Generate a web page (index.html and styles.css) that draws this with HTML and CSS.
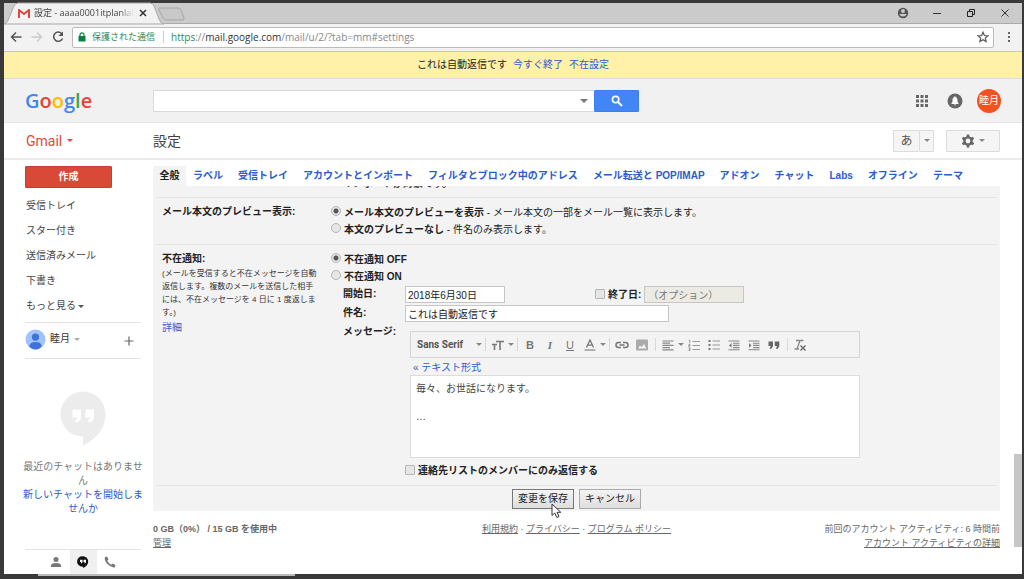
FILE: index.html
```html
<!DOCTYPE html>
<html lang="ja">
<head>
<meta charset="utf-8">
<title>設定 - Gmail</title>
<link rel="stylesheet" href="styles.css">
</head>
<body>
<div class="window">
  <div class="tabstrip">
    <svg class="tab-shape" viewBox="0 0 184 21" aria-hidden="true">
      <path d="M0 21 C3 20 4 18 5 15 L10 3 Q11 0 14 0 H146 Q149 0 150 3 L155 16 Q157 21 160 21 Z" fill="#f2f2f2" stroke="#a9a9a9"/>
      <path d="M155 5 H174 Q176 5 177 7 L180 15 Q181 17 178 17 H162 Q160 17 159 15 L155 7 Q154 5 155 5Z" fill="#c8c8c8" stroke="#a6a6a6"/>
    </svg>
    <div class="tab">
      <svg class="fav" viewBox="0 0 12 9" aria-hidden="true"><path d="M1 9V1L6 5L11 1V9" fill="#f6f6f6" stroke="#d94b3f" stroke-width="2"/></svg>
      <span class="tab-title">設定 - aaaa0001itplanlab</span>
      <button class="bare tab-close" aria-label="タブを閉じる"><svg viewBox="0 0 8 8"><path d="M1 1L7 7M7 1L1 7" stroke="#333" stroke-width="1.5"/></svg></button>
    </div>
    <div class="win-controls">
      <button class="bare" aria-label="ユーザー"><svg viewBox="0 0 12 12"><circle cx="6" cy="6" r="5.2" fill="#555"/><circle cx="6" cy="4" r="1.9" fill="#ccc"/><path d="M2.4 7H9.6Q8.500 9.600 6 9.600T2.400 7Z" fill="#ccc"/></svg></button>
      <button class="bare" aria-label="最小化"><svg viewBox="0 0 12 12"><path d="M2 6.500H10" stroke="#333"/></svg></button>
      <button class="bare" aria-label="元に戻す"><svg viewBox="0 0 12 12"><path d="M2.500 4.500H7.500V9.500H2.500ZM4.500 4V2.500H9.500V7.500H8" fill="none" stroke="#222"/></svg></button>
      <button class="bare" aria-label="閉じる"><svg viewBox="0 0 12 12"><path d="M2.500 2.500L9.500 9.500M9.500 2.500L2.500 9.500" stroke="#333"/></svg></button>
    </div>
  </div>

  <div class="toolbar">
    <button class="bare nav" aria-label="戻る"><svg viewBox="0 0 12 12"><path d="M11.500 6H1.500M6 1.500L1.500 6L6 10.500" fill="none" stroke="#555" stroke-width="1.500"/></svg></button>
    <button class="bare nav" aria-label="進む"><svg viewBox="0 0 12 12"><path d="M.5 6H10.500M6 1.500L10.500 6L6 10.500" fill="none" stroke="#ccc" stroke-width="1.500"/></svg></button>
    <button class="bare nav" aria-label="再読み込み"><svg viewBox="0 0 12 12"><path d="M10 3A4.600 4.600 0 1 0 10.500 7.500" fill="none" stroke="#555" stroke-width="1.500"/><path d="M11 .5V5H6.500Z" fill="#555"/></svg></button>
    <div class="address">
      <svg class="lock" viewBox="0 0 8 10" aria-hidden="true"><rect x=".5" y="4" width="7" height="5.500" fill="#0b8043"/><path d="M2 4V2.800a2 2 0 0 1 4 0V4" fill="none" stroke="#0b8043" stroke-width="1.200"/></svg>
      <span class="secure">保護された通信</span>
      <span class="url"><span class="scheme">https</span>://<span class="host">mail.google.com</span>/mail/u/2/?tab=mm#settings</span>
      <button class="bare star" aria-label="ブックマーク"><svg viewBox="0 0 12 12"><path d="M6 1.200L7.400 4.500L11 4.800L8.300 7.100L9.100 10.600L6 8.700L2.900 10.600L3.700 7.100L1 4.800L4.600 4.500Z" fill="none" stroke="#555" stroke-width="1.200"/></svg></button>
    </div>
    <button class="bare more" aria-label="メニュー"><svg viewBox="0 0 12 12"><path d="M5 1h2v2H5zM5 5h2v2H5zM5 9h2v2H5z" fill="#666"/></svg></button>
  </div>

  <div class="banner">これは自動返信です<a href="#">今すぐ終了</a><a href="#">不在設定</a></div>

  <header class="header">
    <div class="side-col">
      <a href="#" class="logo" aria-label="Google"><span class="c-b">G</span><span class="c-r">o</span><span class="c-y">o</span><span class="c-b">g</span><span class="c-g">l</span><span class="c-r">e</span></a>
    </div>
    <form class="search">
      <input type="text" class="search-input" aria-label="メールを検索">
      <button type="button" class="bare search-opt" aria-label="検索オプション"><i class="caret big"></i></button>
      <button type="button" class="search-btn" aria-label="検索"><svg viewBox="0 0 12 12"><circle cx="4.600" cy="4.600" r="3.200" fill="none" stroke="#fff" stroke-width="1.600"/><path d="M7 7L11 11" stroke="#fff" stroke-width="2"/></svg></button>
    </form>
    <div class="account">
      <button class="bare" aria-label="アプリ"><svg class="i14" viewBox="0 0 14 14"><path d="M1 1h3v3H1zM5.500 1h3v3h-3zM10 1h3v3h-3zM1 5.500h3v3H1zM5.500 5.500h3v3h-3zM10 5.500h3v3h-3zM1 10h3v3H1zM5.500 10h3v3h-3zM10 10h3v3h-3z" fill="#666"/></svg></button>
      <button class="bare" aria-label="通知"><svg class="i16" viewBox="0 0 16 16"><circle cx="8" cy="8" r="7.500" fill="#666"/><path d="M4.500 11V10L5.500 9V7Q5.500 4.500 7.300 4V3.500h1.400V4Q10.500 4.500 10.500 7V9L11.500 10V11ZM7 11.500H9Q8.800 12.500 8 12.500T7 11.500Z" fill="#fff"/></svg></button>
      <button class="avatar">睦月</button>
    </div>
  </header>

  <div class="subheader">
    <div class="side-col"><button class="bare gmail">Gmail<i class="caret red"></i></button></div>
    <h1>設定</h1>
    <div class="sub-actions">
      <div class="ime"><button class="gbtn ime-main">あ</button><button class="gbtn ime-drop" aria-label="入力ツール"><i class="caret"></i></button></div>
      <button class="gbtn gear" aria-label="設定メニュー"><svg viewBox="0 0 14 14"><circle cx="7" cy="7" r="3.600" fill="none" stroke="#666" stroke-width="2.400"/><path d="M7 .5V3M7 11V13.500M1.400 3.800L3.500 5M10.500 9L12.600 10.200M1.400 10.200L3.500 9M10.500 5L12.600 3.800" stroke="#666" stroke-width="2.600"/></svg><i class="caret"></i></button>
    </div>
  </div>

  <div class="body">
    <aside class="sidebar">
      <button class="compose">作成</button>
      <nav class="folders">
        <a href="#">受信トレイ</a>
        <a href="#">スター付き</a>
        <a href="#">送信済みメール</a>
        <a href="#">下書き</a>
        <a href="#">もっと見る<i class="caret dark"></i></a>
      </nav>
      <div class="me">
        <svg class="me-pic" viewBox="0 0 22 22" aria-hidden="true"><circle cx="11" cy="11" r="10.500" fill="#a1c2fa"/><circle cx="11" cy="8.500" r="3.800" fill="#3f73dc"/><path d="M4.500 18.500Q4.500 13.500 11 13.500T17.500 18.500Q14.500 21.500 11 21.500T4.500 18.500Z" fill="#3f73dc"/></svg>
        <span>睦月</span><i class="caret pale"></i>
        <button class="bare plus" aria-label="新しい会話"><svg viewBox="0 0 10 10"><path d="M5 .5V9.500M.5 5H9.500" stroke="#666" stroke-width="1.200"/></svg></button>
      </div>
      <div class="chat">
        <svg class="bubble" viewBox="0 0 46 55" aria-hidden="true"><path d="M23 0.500A22.500 22.500 0 1 0 23 45.500V54.500Q45.500 43 45.500 23A22.500 22.500 0 0 0 23 .5Z" fill="#ececec"/><path d="M12.500 18.500h8.500v7Q21 31 15.500 31.500V28.500Q18 28 18 26.500H12.500ZM25.500 18.500H34v7Q34 31 28.500 31.500V28.500Q31 28 31 26.500H25.500Z" fill="#fff"/></svg>
        <p>最近のチャットはありませ<br>ん</p>
        <a href="#">新しいチャットを開始しま<br>せんか</a>
      </div>
      <div class="chat-tabs">
        <button class="bare" aria-label="連絡先"><svg viewBox="0 0 12 12"><circle cx="6" cy="3.400" r="2.500" fill="#777"/><path d="M1 11V9.500Q1 7 6 7T11 9.500V11Z" fill="#777"/></svg></button>
        <button class="bare active" aria-label="ハングアウト"><svg viewBox="0 0 12 12"><path d="M6 .3A5.200 5.200 0 1 0 6 10.600V12Q11.200 9.500 11.200 5.500A5.200 5.200 0 0 0 6 .3Z" fill="#111"/><path d="M3 3.800H5.500V5.800Q5.500 7.300 4 7.500V6H3ZM6.500 3.800H9V5.800Q9 7.300 7.500 7.500V6H6.500Z" fill="#fff"/></svg></button>
        <button class="bare" aria-label="電話"><svg viewBox="0 0 12 12"><path d="M.8 1.200L3 .5L4.500 3.500L3.300 4.800Q4.500 7.300 7.200 8.700L8.500 7.500L11.500 9L10.800 11.200Q8.500 12 5 9.300Q0 5.500 .8 1.200Z" fill="#777"/></svg></button>
      </div>
    </aside>

    <main class="main">
      <nav class="tabs">
        <a href="#" class="on">全般</a>
        <div class="tab-links">
          <a href="#">ラベル</a><a href="#">受信トレイ</a><a href="#">アカウントとインポート</a><a href="#">フィルタとブロック中のアドレス</a><a href="#">メール転送と POP/IMAP</a><a href="#">アドオン</a><a href="#">チャット</a><a href="#">Labs</a><a href="#">オフライン</a><a href="#">テーマ</a>
        </div>
      </nav>

      <form class="panel">
        <div class="cut"><span>インポートが対象です。</span></div>
        <section class="row">
          <h2>メール本文のプレビュー表示:</h2>
          <div class="opts">
            <label><input type="radio" name="snip" checked><span><b>メール本文のプレビューを表示</b> - メール本文の一部をメール一覧に表示します。</span></label>
            <label><input type="radio" name="snip"><span><b>本文のプレビューなし</b> - 件名のみ表示します。</span></label>
          </div>
        </section>
        <section class="row vacation">
          <div class="desc">
            <h2>不在通知:</h2>
            <p>(メールを受信すると不在メッセージを自動<br>返信します。複数のメールを送信した相手<br>には、不在メッセージを 4 日に 1 度返しま<br>す。)</p>
            <a href="#">詳細</a>
          </div>
          <div class="opts">
            <label><input type="radio" name="vac" checked><b>不在通知 OFF</b></label>
            <label><input type="radio" name="vac"><b>不在通知 ON</b></label>
            <div class="fields">
              <label for="start">開始日:</label>
              <div class="dates">
                <input id="start" class="txt date" type="text" value="2018年6月30日">
                <div class="end"><input id="endon" type="checkbox"><label for="endon">終了日:</label><input class="txt date off" type="text" value="（オプション）" aria-label="終了日" disabled></div>
              </div>
              <label for="subj">件名:</label>
              <input id="subj" class="txt subject" type="text" value="これは自動返信です">
              <label for="msg">メッセージ:</label>
              <div class="editor">
                <div class="tools">
                  <div class="font"><select aria-label="フォント"><option>Sans Serif</option></select><i class="caret"></i></div>
                  <i class="sep"></i>
                  <button type="button" class="bare wide" aria-label="サイズ"><svg viewBox="0 0 12 12"><path d="M4 2.500H12M8 2.500V11M0 5.500H5M2.500 5.500V11" fill="none" stroke="#777" stroke-width="1.600"/></svg><i class="caret"></i></button>
                  <i class="sep"></i>
                  <button type="button" class="bare ic g-b" aria-label="太字">B</button>
                  <button type="button" class="bare ic g-i" aria-label="斜体">I</button>
                  <button type="button" class="bare ic g-u" aria-label="下線">U</button>
                  <button type="button" class="bare wide" aria-label="文字色"><svg viewBox="0 0 12 12"><path d="M2.500 8.500L6 1L9.500 8.500M3.500 6.200H8.500" fill="none" stroke="#777" stroke-width="1.300"/><path d="M.5 11H11.500" stroke="#aaa" stroke-width="1.800"/></svg><i class="caret"></i></button>
                  <i class="sep"></i>
                  <button type="button" class="bare ic" aria-label="リンク"><svg class="i14" viewBox="0 0 14 14"><path d="M6 4.500H3.500a2.500 2.500 0 0 0 0 5H6M8 4.500h2.500a2.500 2.500 0 0 1 0 5H8M4.500 7h5" fill="none" stroke="#777" stroke-width="1.500"/></svg></button>
                  <button type="button" class="bare ic" aria-label="画像"><svg viewBox="0 0 12 12"><rect y=".5" width="12" height="11" rx="1" fill="#aaa"/><path d="M2 9.500L4 6.500L5.500 8L8 5L10.500 9.500Z" fill="#f3f3f3"/></svg></button>
                  <i class="sep"></i>
                  <button type="button" class="bare wide" aria-label="配置"><svg viewBox="0 0 12 12"><path d="M.5 2H11.500M.5 4.200H8M.5 6.400H11.500M.5 8.600H8M.5 10.800H11.500" stroke="#888" stroke-width="1.200"/></svg><i class="caret"></i></button>
                  <button type="button" class="bare ic" aria-label="番号付きリスト"><svg viewBox="0 0 12 12"><path d="M4.500 2.500H12M4.500 6.500H12M4.500 10.500H12" stroke="#999" stroke-width="1.200"/><path d="M.8 1.200H1.800V4M.5 5.300H2V6.500H.8V7.700H2.200M.5 9H2V11.500H.5M1 10.300H2" fill="none" stroke="#777" stroke-width=".7"/></svg></button>
                  <button type="button" class="bare ic" aria-label="箇条書き"><svg viewBox="0 0 12 12"><path d="M4.500 2H12M4.500 6H12M4.500 10H12" stroke="#999" stroke-width="1.200"/><path d="M.5 1h2v2h-2zM.5 5h2v2h-2zM.5 9h2v2h-2z" fill="#777"/></svg></button>
                  <button type="button" class="bare ic" aria-label="インデント減"><svg viewBox="0 0 12 12"><path d="M.5 2H11.500M5 4.200H11.500M5 6.400H11.500M5 8.600H11.500M.5 10.800H11.500" stroke="#888" stroke-width="1.100"/><path d="M3.500 4L1 6.400L3.500 8.800Z" fill="#777"/></svg></button>
                  <button type="button" class="bare ic" aria-label="インデント増"><svg viewBox="0 0 12 12"><path d="M.5 2H11.500M5 4.200H11.500M5 6.400H11.500M5 8.600H11.500M.5 10.800H11.500" stroke="#888" stroke-width="1.100"/><path d="M1 4L3.500 6.400L1 8.800Z" fill="#777"/></svg></button>
                  <button type="button" class="bare ic" aria-label="引用"><svg viewBox="0 0 12 12"><path d="M.5 2.500H5V7L3.500 9.800H1.500L2.700 7H.5ZM6.800 2.500H11.300V7L9.800 9.800H7.800L9 7H6.800Z" fill="#666"/></svg></button>
                  <i class="sep"></i>
                  <button type="button" class="bare ic" aria-label="書式をクリア"><svg viewBox="0 0 12 12"><path d="M2 1.500H9.500M6 1.500L3.200 9.500M.5 10H5" fill="none" stroke="#888" stroke-width="1.300"/><path d="M6.500 6.500L11.500 11.500M11.500 6.500L6.500 11.500" stroke="#666" stroke-width="1.400"/></svg></button>
                </div>
                <a href="#" class="plain">« テキスト形式</a>
                <textarea id="msg">毎々、お世話になります。

…</textarea>
              </div>
            </div>
            <label class="contacts"><input type="checkbox"><b>連絡先リストのメンバーにのみ返信する</b></label>
          </div>
        </section>
        <div class="row actions">
          <button type="button" class="std hot">変更を保存<svg class="cursor" viewBox="0 0 11 16" aria-hidden="true"><path d="M1 1V12.500L3.800 10L5.800 14.500L8 13.500L6 9.300H9.800Z" fill="#fff" stroke="#333"/></svg></button>
          <button type="button" class="std">キャンセル</button>
        </div>
      </form>

      <footer class="footer">
        <div class="f-left"><b>0 GB（0%） / 15 GB を使用中</b><br><a href="#">管理</a></div>
        <div class="f-mid"><a href="#">利用規約</a> · <a href="#">プライバシー</a> · <a href="#">プログラム ポリシー</a></div>
        <div class="f-right">前回のアカウント アクティビティ: 6 時間前<br><a href="#">アカウント アクティビティの詳細</a></div>
      </footer>
    </main>
    <div class="scroll"><i></i></div>
  </div>
  <div class="taskbar"><i></i></div>
</div>
</body>
</html>
```
FILE: styles.css
```css
* { box-sizing: border-box; }
body {
  margin: 0;
  background: #3a3939;
  color: #222;
  font: 10px/16px "Liberation Sans", "Noto Sans CJK JP", sans-serif;
}
a { color: #2a5bd0; text-decoration: none; }
h1, h2, p { margin: 0; font-size: inherit; }
svg { display: block; width: 12px; height: 12px; }
.i14 { width: 14px; height: 14px; }
.i16 { width: 16px; height: 16px; }
button, input, select, textarea { font: inherit; color: inherit; margin: 0; }
.bare { display: flex; align-items: center; padding: 0; border: 0; background: none; }
.caret {
  display: inline-block;
  flex: none;
  border: 3px solid transparent;
  border-top-color: #888;
  border-bottom: 0;
}
.caret.big { border-width: 4px 4px 0; border-top-color: #777; }
.caret.red { border-top-color: #dd4b39; margin-left: 5px; }
.caret.dark { border-top-color: #555; margin-left: 2px; vertical-align: middle; }
.caret.pale { border-top-color: #aaa; }

.window {
  display: flex;
  flex-direction: column;
  min-height: 100vh;
  border: solid #3a3939;
  border-width: 3px 2px 0 4px;
}

/* Browser frame */
.tabstrip {
  position: relative;
  display: flex;
  justify-content: space-between;
  align-items: center;
  height: 21px;
  background: #cbcbcb;
  border-bottom: 1px solid #aaa;
}
.tab-shape { position: absolute; left: 0; top: 0; width: 184px; height: 21px; overflow: visible; }
.tab { position: relative; display: flex; align-items: center; padding-left: 14px; }
.fav { height: 9px; margin-right: 4px; }
.tab-title {
  width: 100px;
  overflow: hidden;
  white-space: nowrap;
  font-family: "Open Sans", "Noto Sans CJK JP", sans-serif;
  font-size: 9px;
  color: #444;
  -webkit-mask-image: linear-gradient(90deg, #000 85%, transparent);
  mask-image: linear-gradient(90deg, #000 85%, transparent);
}
.tab-close { margin-left: 5px; }
.tab-close svg { width: 8px; height: 8px; }
.win-controls { display: flex; gap: 22px; padding-right: 11px; }
.toolbar {
  display: flex;
  align-items: center;
  gap: 9px;
  height: 28px;
  padding: 0 7px 1px 6px;
  background: #f2f2f2;
  border-bottom: 1px solid #c6c6c6;
}
.address {
  display: flex;
  align-items: center;
  flex: 1;
  height: 21px;
  margin: 0 0 0 -1px;
  padding: 0 4px 0 5px;
  background: #fff;
  border: 1px solid #bbb;
  border-radius: 2px;
  font-family: "Open Sans", "Noto Sans CJK JP", sans-serif;
  color: #888;
}
.lock { width: 8px; height: 10px; margin-right: 6px; }
.secure { padding-right: 8px; font-size: 9px; line-height: 12px; border-right: 1px solid #ccc; color: #2e8b57; }
.url { margin-left: 7px; }
.scheme { color: #2e8b57; }
.host { color: #333; }
.star { margin-left: auto; }

.banner {
  display: flex;
  justify-content: center;
  align-items: center;
  gap: 6px;
  height: 27px;
  background: #fff1a8;
  border-bottom: 1px solid #ddd;
}

/* Gmail headers */
.header, .subheader { display: flex; align-items: center; padding-right: 21px; }
.header { height: 44px; background: #f1f1f1; border-bottom: 1px solid #e5e5e5; }
.side-col { flex: none; width: 149px; padding-left: 21px; }
.logo { font: 600 20px/26px "Open Sans", sans-serif; }
.c-b { color: #4285f4; }
.c-r { color: #ea4335; }
.c-y { color: #fbbc05; }
.c-g { color: #34a853; }
.search { display: flex; flex: 0 1 486px; height: 22px; }
.search-input { flex: 1; min-width: 0; border: 1px solid #d9d9d9; border-right: 0; background: #fff; }
.search-opt { padding: 0 6px; background: #fff; border: solid #d9d9d9; border-width: 1px 0; }
.search-btn {
  display: flex;
  align-items: center;
  justify-content: center;
  width: 45px;
  padding: 0;
  border: 1px solid #3e7ff0;
  border-radius: 1px;
  background: #4285f4;
}
.account { display: flex; align-items: center; gap: 18px; margin-left: auto; }
.account .avatar { margin-left: -4px; }
.avatar { width: 24px; height: 24px; padding: 0; border: 0; border-radius: 50%; background: #f4511e; color: #fff; line-height: 24px; white-space: nowrap; }
.subheader { height: 37px; background: #fff; border-bottom: 2px solid #ebebeb; padding-right: 22px; }
.gmail { font: 14px/20px Roboto, sans-serif; color: #dd4b39; margin-left: 1px; }
.subheader h1 { font-size: 14px; font-weight: 400; color: #444; }
.sub-actions { display: flex; gap: 12px; margin-left: auto; }
.ime { display: flex; }
.gbtn {
  display: flex;
  align-items: center;
  justify-content: center;
  gap: 4px;
  height: 22px;
  padding: 0;
  border: 1px solid #dcdcdc;
  border-radius: 1px;
  background: #f5f5f5;
  color: #555;
}
.ime-main { width: 26px; font-size: 12px; border-right: 0; }
.ime-drop { width: 15px; }
.gear { width: 54px; }
.gear svg { width: 14px; height: 14px; }

/* Body */
.body { display: flex; flex: 1; background: #fff; }
.sidebar { display: flex; flex-direction: column; flex: none; width: 149px; padding: 6px 12px 0 21px; }
.compose {
  width: 87px;
  height: 22px;
  padding: 0;
  border: 1px solid #c63e2d;
  border-radius: 1px;
  background: #d84937;
  color: #fff;
  font-weight: 700;
}
.folders { display: flex; flex-direction: column; gap: 9px; padding: 10px 0 8px 1px; }
.folders a { color: #444; }
.me { display: flex; align-items: center; gap: 4px; height: 37px; border: solid #e3e3e3; border-width: 1px 0; color: #333; padding-bottom: 3px; }
.me-pic { width: 21px; height: 21px; }
.plus { margin: 3px 7px 0 auto; }
.plus svg { width: 10px; height: 10px; }
.chat { display: flex; flex-direction: column; align-items: center; padding-top: 32px; text-align: center; line-height: 14px; white-space: nowrap; color: #777; }
.bubble { width: 46px; height: 55px; margin-bottom: 14px; }
.chat-tabs { display: flex; justify-content: center; margin-top: auto; border-top: 1px solid #e3e3e3; }
.chat-tabs button { justify-content: center; width: 27px; height: 24px; }
.chat-tabs .active { background: #f0f0f0; }
.main { flex: 1; min-width: 0; padding-top: 6px; }
.tabs { display: flex; height: 20px; line-height: 19px; font-weight: 700; }
.tabs .on { width: 33px; background: #f3f3f3; color: #222; text-align: center; }
.tab-links { display: flex; flex: 0 1 770px; justify-content: space-between; margin-left: 7px; white-space: nowrap; }

.panel { background: #f3f3f3; padding: 0 3px; }
.cut { display: flex; align-items: flex-end; height: 2px; margin-bottom: 9px; padding-left: 187px; overflow: hidden; font-weight: 700; color: #444; }
.cut span { line-height: 8px; }
.row { display: flex; padding: 6px; border-top: 1px solid #e3e3e3; }
.row h2, .desc { flex: none; width: 169px; }
.desc p { margin-bottom: 1px; font-size: 8px; line-height: 13px; white-space: nowrap; color: #333; }
.opts { flex: 1; min-width: 0; }
.opts > label { display: flex; align-items: center; gap: 3px; height: 17px; white-space: nowrap; }
input[type="radio"], input[type="checkbox"] {
  appearance: none;
  flex: none;
  width: 10px;
  height: 10px;
  border: 1px solid #b5b5b5;
  background: #e6e6e6;
}
input[type="radio"] { border-radius: 50%; margin-bottom: 3px; }
input[type="checkbox"] { border-radius: 1px; margin-bottom: 2px; }
input[type="radio"]:checked { background: radial-gradient(circle, #555 2px, #e6e6e6 3px); }
.fields {
  display: grid;
  grid-template-columns: 62px 1fr;
  row-gap: 2px;
  padding: 1px 0 0 12px;
  font-weight: 700;
}
.fields label { white-space: nowrap; }
.txt { height: 17px; padding: 0 2px; border: 1px solid #c6c6c6; background: #fff; font-weight: 400; }
.date { width: 100px; }
.subject { width: 264px; }
.off { background: #ebebe4; color: #777; padding-left: 3px; }
.dates { display: flex; gap: 90px; }
.end { display: flex; align-items: center; gap: 3px; }
.editor { width: 455px; max-width: 100%; padding: 7px 0 0 5px; font-weight: 400; }
.tools {
  display: flex;
  align-items: center;
  height: 27px;
  padding-left: 6px;
  border: 1px solid #d5d5d5;
}
.tools button { flex: none; justify-content: center; }
.font { display: flex; align-items: center; gap: 2px; }
.font select { appearance: none; width: 57px; padding: 0; border: 0; background: none; font: 700 10px/16px Roboto, sans-serif; color: #555; }
.sep { flex: none; width: 1px; height: 13px; margin: 0 2px 0 3px; background: #d8d8d8; }
.ic { width: 20px; color: #777; font-size: 11px; }
.g-b { font-weight: 700; }
.g-i { font-family: "Liberation Serif", serif; font-style: italic; font-weight: 700; }
.g-u { text-decoration: underline; }
.tools .wide { justify-content: flex-start; gap: 4px; width: 26px; padding-left: 4px; }
.plain { display: block; height: 17px; padding: 2px 0 0 3px; }
.editor textarea {
  display: block;
  width: 100%;
  height: 83px;
  padding: 6px 5px;
  border: 1px solid #dcdcdc;
  background: #fff;
  color: #444;
  line-height: 14px;
  resize: none;
}
.opts > .contacts { margin-top: 4px; padding-left: 74px; }
.actions { justify-content: center; gap: 5px; padding: 3px 0 2px; }
.std {
  position: relative;
  height: 20px;
  padding: 0 5px;
  border: 1px solid #aaa;
  background: linear-gradient(#f4f4f4, #dedede);
  line-height: 16px;
}
.hot { border-color: #777; }
.cursor { position: absolute; left: 38px; top: 13px; width: 11px; height: 16px; z-index: 1; }
.footer { display: grid; grid-template-columns: 1fr auto 1fr; padding-top: 11px; font-size: 9px; line-height: 14px; color: #666; white-space: nowrap; }
.footer a { color: #666; text-decoration: underline; }
.f-right { text-align: right; }
.scroll { flex: none; width: 22px; padding: 294px 0 0 14px; }
.scroll i { display: block; height: 93px; background: #c6c6c6; }
.taskbar { height: 5px; padding-left: 34px; background: #3a3939; }
.taskbar i { display: block; width: 257px; height: 2px; background: #bbb; }
```
